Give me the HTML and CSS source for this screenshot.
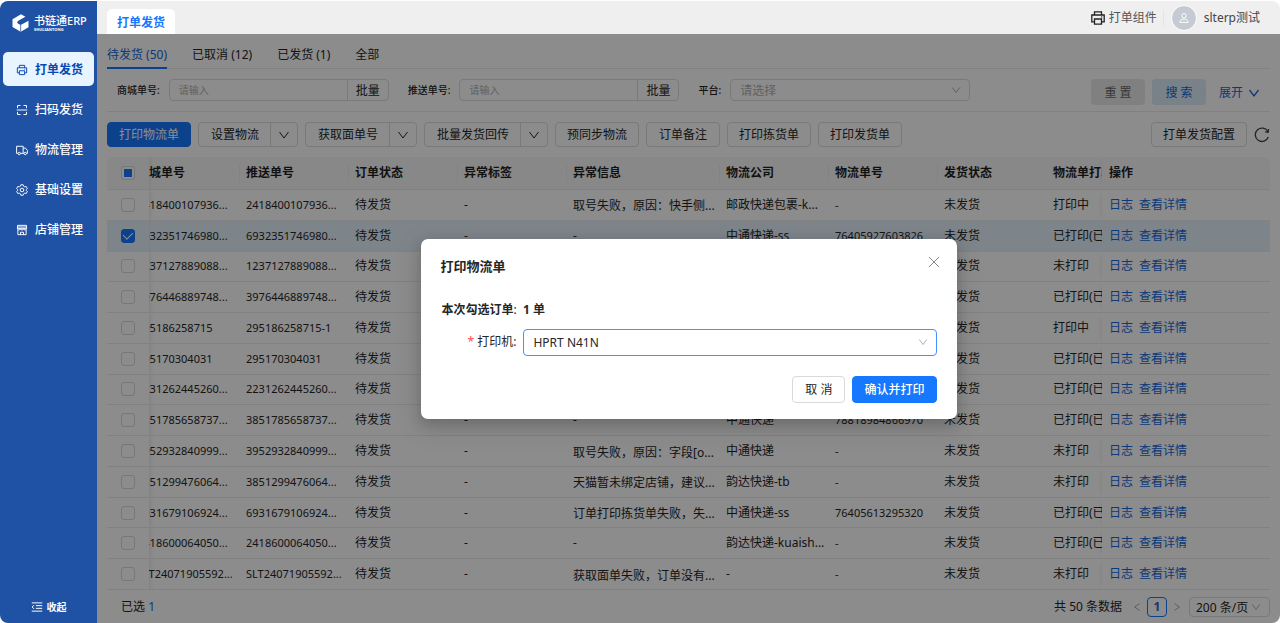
FILE: index.html
```html
<!DOCTYPE html>
<html lang="zh-CN">
<head>
<meta charset="utf-8">
<meta name="viewport" content="width=device-width, initial-scale=1">
<title>书链通ERP</title>
<link rel="stylesheet" href="styles.css">
</head>
<body>
<svg class="sprite" aria-hidden="true">
  <symbol id="i-print" viewBox="0 0 16 16"><path d="M4.500 5V1.800h7V5M4.500 11.800H1.800V5h12.400v6.800h-2.700M4.500 9h7v5.200h-7z"/><path d="M11.200 7h1"/></symbol>
  <symbol id="i-down" viewBox="0 0 12 12"><path d="M1.500 3 6 9l4.500-6"/></symbol>
  <symbol id="i-left" viewBox="0 0 12 12"><path d="M9 2 3 6l6 4"/></symbol>
  <symbol id="i-right" viewBox="0 0 12 12"><path d="m3 2 6 4-6 4"/></symbol>
</svg>
<div class="app">
  <aside class="sidebar">
    <div class="logo">
      <svg class="logo-mark" viewBox="0 0 17 18"><path fill="#fff" d="M.5 5.200 9 .3l4.400 2.500-6.600 3.800C4.600 8 5 9 6.200 9.700L8.700 11v6.700L.5 13z"/><path fill="#fff" d="M8.700 11 16.500 6.800v6.400l-7.800 4.500z"/><path d="M8.700 11v6.500" stroke="#1f51a5" stroke-width=".7"/></svg>
      <div class="logo-text"><span class="logo-name">书链通ERP</span><span class="logo-sub">SHULIANTONG</span></div>
    </div>
    <nav class="menu">
      <a class="menu-item active" href="#"><svg class="icon"><use href="#i-print"/></svg>打单发货</a>
      <a class="menu-item" href="#"><svg class="icon" viewBox="0 0 16 16"><path d="M2 5.500V2h4M10 2h4v3.500M2 10.500V14h4M10 14h4v-3.500M1 8h14"/></svg>扫码发货</a>
      <a class="menu-item" href="#"><svg class="icon" viewBox="0 0 16 16"><path d="M2.500 12.500H.8V3h8.700v9.500H6M9.500 5.500h3.200L15.200 8.500v4h-1M9.500 12.500h1"/><circle cx="4.300" cy="12.700" r="1.600"/><circle cx="12.300" cy="12.700" r="1.600"/></svg>物流管理</a>
      <a class="menu-item" href="#"><svg class="icon" viewBox="0 0 16 16"><path d="M6.500 1h3l.6 1.900 1.500.9 2-.5L15.100 6l-1.400 1.500v1L15.100 10l-1.500 2.700-2-.5-1.500.9L9.500 15h-3l-.6-1.900-1.500-.9-2 .5L.9 10l1.400-1.500v-1L.9 6l1.500-2.700 2 .5 1.500-.9z"/><circle cx="8" cy="8" r="2.400"/></svg>基础设置</a>
      <a class="menu-item" href="#"><svg class="icon" viewBox="0 0 16 16"><path d="M2 1.800h12v4.400H2zM2.500 8v6.200h11V8M1.800 6.200c0 2.400 4 2.400 4 0 0 2.400 4.400 2.400 4.400 0 0 2.400 4 2.400 4 0M6 14v-3h4v3M2 4h12"/></svg>店铺管理</a>
    </nav>
    <button class="collapse" type="button"><svg class="icon" viewBox="0 0 16 16"><path d="M1 2.500h14M6.500 6.200H15M6.500 9.800H15M1 13.500h14M4 5.500 1.500 8 4 10.500"/></svg>收起</button>
  </aside>

  <div class="main">
    <header class="topbar">
      <a class="page-tab" href="#">打单发货</a>
      <div class="top-right">
        <a class="component" href="#"><svg class="icon"><use href="#i-print"/></svg>打单组件</a>
        <span class="avatar"><svg class="icon" viewBox="0 0 16 16"><circle cx="8" cy="5" r="3"/><path d="M2.500 13.800c0-3.200 2-4.300 5.500-4.300s5.500 1.100 5.500 4.300z"/></svg></span>
        <span class="user">slterp测试</span>
      </div>
    </header>

    <div class="workspace">
      <div class="content">
        <nav class="tabs">
          <a class="tab current" href="#">待发货 (50)</a>
          <a class="tab" href="#">已取消 (12)</a>
          <a class="tab" href="#">已发货 (1)</a>
          <a class="tab" href="#">全部</a>
        </nav>

        <form class="filters">
          <div class="field">
            <label for="mall">商城单号:</label>
            <div class="group"><input id="mall" type="text" placeholder="请输入"><button type="button">批量</button></div>
          </div>
          <div class="field">
            <label for="push">推送单号:</label>
            <div class="group"><input id="push" type="text" placeholder="请输入"><button type="button">批量</button></div>
          </div>
          <div class="field">
            <label for="platform">平台:</label>
            <div class="select wide"><select id="platform" class="placeholder"><option>请选择</option></select><svg class="icon"><use href="#i-down"/></svg></div>
          </div>
          <div class="filter-actions">
            <button class="reset" type="button">重 置</button>
            <button class="search" type="button">搜 索</button>
            <button class="expand" type="button">展开<svg class="icon"><use href="#i-down"/></svg></button>
          </div>
        </form>

        <div class="actions">
          <button class="btn primary" type="button">打印物流单</button>
          <div class="split"><button type="button">设置物流</button><button class="caret" type="button" aria-label="更多"><svg class="icon"><use href="#i-down"/></svg></button></div>
          <div class="split"><button type="button">获取面单号</button><button class="caret" type="button" aria-label="更多"><svg class="icon"><use href="#i-down"/></svg></button></div>
          <div class="split"><button type="button">批量发货回传</button><button class="caret" type="button" aria-label="更多"><svg class="icon"><use href="#i-down"/></svg></button></div>
          <button class="btn" type="button">预同步物流</button>
          <button class="btn" type="button">订单备注</button>
          <button class="btn" type="button">打印拣货单</button>
          <button class="btn" type="button">打印发货单</button>
          <button class="btn config" type="button">打单发货配置</button>
          <button class="reload" type="button" aria-label="刷新"><svg class="icon" viewBox="0 0 16 16"><path d="M14.300 10A6.700 6.700 0 1 1 14 4.800M14.600 2.200 14.200 5.200 11.200 4.800"/></svg></button>
        </div>

        <div class="table-wrap">
          <table>
            <colgroup><col class="c-check"><col class="c-mall"><col class="c-std"><col class="c-std"><col class="c-std"><col class="c-info"><col class="c-std"><col class="c-std"><col class="c-std"><col class="c-print"><col></colgroup>
            <thead>
              <tr><th><input class="some" type="checkbox" aria-label="全选"></th><th class="mall"><span>商城单号</span></th><th>推送单号</th><th>订单状态</th><th>异常标签</th><th>异常信息</th><th>物流公司</th><th>物流单号</th><th>发货状态</th><th class="cut">物流单打印</th><th class="ops">操作</th></tr>
            </thead>
            <tbody>
              <tr><td><input type="checkbox" aria-label="选择"></td><td class="num mall"><span>2418400107936...</span></td><td class="num">2418400107936...</td><td>待发货</td><td>-</td><td class="info">取号失败，原因：快手侧...</td><td>邮政快递包裹-k...</td><td class="num">-</td><td>未发货</td><td class="cut">打印中</td><td class="ops"><a href="#">日志</a><a href="#">查看详情</a></td></tr>
              <tr class="selected"><td><input type="checkbox" aria-label="选择" checked></td><td class="num mall"><span>6932351746980...</span></td><td class="num">6932351746980...</td><td>待发货</td><td>-</td><td>-</td><td>中通快递-ss</td><td class="num">76405927603826</td><td>未发货</td><td class="cut">已打印(已</td><td class="ops"><a href="#">日志</a><a href="#">查看详情</a></td></tr>
              <tr><td><input type="checkbox" aria-label="选择"></td><td class="num mall"><span>1237127889088...</span></td><td class="num">1237127889088...</td><td>待发货</td><td></td><td></td><td></td><td></td><td>未发货</td><td class="cut">未打印</td><td class="ops"><a href="#">日志</a><a href="#">查看详情</a></td></tr>
              <tr><td><input type="checkbox" aria-label="选择"></td><td class="num mall"><span>3976446889748...</span></td><td class="num">3976446889748...</td><td>待发货</td><td></td><td></td><td></td><td></td><td>未发货</td><td class="cut">已打印(已</td><td class="ops"><a href="#">日志</a><a href="#">查看详情</a></td></tr>
              <tr><td><input type="checkbox" aria-label="选择"></td><td class="num mall"><span>295186258715</span></td><td class="num">295186258715-1</td><td>待发货</td><td></td><td></td><td></td><td></td><td>未发货</td><td class="cut">打印中</td><td class="ops"><a href="#">日志</a><a href="#">查看详情</a></td></tr>
              <tr><td><input type="checkbox" aria-label="选择"></td><td class="num mall"><span>295170304031</span></td><td class="num">295170304031</td><td>待发货</td><td></td><td></td><td></td><td></td><td>未发货</td><td class="cut">已打印(已</td><td class="ops"><a href="#">日志</a><a href="#">查看详情</a></td></tr>
              <tr><td><input type="checkbox" aria-label="选择"></td><td class="num mall"><span>2231262445260...</span></td><td class="num">2231262445260...</td><td>待发货</td><td></td><td></td><td></td><td></td><td>未发货</td><td class="cut">已打印(已</td><td class="ops"><a href="#">日志</a><a href="#">查看详情</a></td></tr>
              <tr><td><input type="checkbox" aria-label="选择"></td><td class="num mall"><span>3851785658737...</span></td><td class="num">3851785658737...</td><td>待发货</td><td>-</td><td>-</td><td>中通快递</td><td class="num">78818984866970</td><td>未发货</td><td class="cut">已打印(已</td><td class="ops"><a href="#">日志</a><a href="#">查看详情</a></td></tr>
              <tr><td><input type="checkbox" aria-label="选择"></td><td class="num mall"><span>3952932840999...</span></td><td class="num">3952932840999...</td><td>待发货</td><td>-</td><td class="info">取号失败，原因：字段[o...</td><td>中通快递</td><td class="num">-</td><td>未发货</td><td class="cut">未打印</td><td class="ops"><a href="#">日志</a><a href="#">查看详情</a></td></tr>
              <tr><td><input type="checkbox" aria-label="选择"></td><td class="num mall"><span>3851299476064...</span></td><td class="num">3851299476064...</td><td>待发货</td><td>-</td><td class="info">天猫暂未绑定店铺，建议...</td><td>韵达快递-tb</td><td class="num">-</td><td>未发货</td><td class="cut">未打印</td><td class="ops"><a href="#">日志</a><a href="#">查看详情</a></td></tr>
              <tr><td><input type="checkbox" aria-label="选择"></td><td class="num mall"><span>6931679106924...</span></td><td class="num">6931679106924...</td><td>待发货</td><td>-</td><td class="info">订单打印拣货单失败，失...</td><td>中通快递-ss</td><td class="num">76405613295320</td><td>未发货</td><td class="cut">已打印(已</td><td class="ops"><a href="#">日志</a><a href="#">查看详情</a></td></tr>
              <tr><td><input type="checkbox" aria-label="选择"></td><td class="num mall"><span>2418600064050...</span></td><td class="num">2418600064050...</td><td>待发货</td><td>-</td><td>-</td><td>韵达快递-kuaish...</td><td class="num">-</td><td>未发货</td><td class="cut">已打印(已</td><td class="ops"><a href="#">日志</a><a href="#">查看详情</a></td></tr>
              <tr><td><input type="checkbox" aria-label="选择"></td><td class="num mall"><span>SLT24071905592...</span></td><td class="num">SLT24071905592...</td><td>待发货</td><td>-</td><td class="info">获取面单失败，订单没有...</td><td>-</td><td class="num">-</td><td>未发货</td><td class="cut">未打印</td><td class="ops"><a href="#">日志</a><a href="#">查看详情</a></td></tr>
            </tbody>
          </table>
        </div>

        <footer class="footer">
          <span>已选 <a href="#">1</a></span>
          <div class="pager">
            <span class="total">共 50 条数据</span>
            <button class="step" type="button" aria-label="上一页"><svg class="icon"><use href="#i-left"/></svg></button>
            <button class="page" type="button">1</button>
            <button class="step" type="button" aria-label="下一页"><svg class="icon"><use href="#i-right"/></svg></button>
            <div class="select size"><select aria-label="每页条数"><option>200 条/页</option></select><svg class="icon"><use href="#i-down"/></svg></div>
          </div>
        </footer>
      </div>

      <div class="mask">
        <section class="modal" role="dialog" aria-labelledby="modal-title">
          <div class="modal-head">
            <h2 id="modal-title">打印物流单</h2>
            <button class="close" type="button" aria-label="关闭"><svg class="icon" viewBox="0 0 12 12"><path d="m1 1 10 10M11 1 1 11"/></svg></button>
          </div>
          <p class="count"><b>本次勾选订单</b>:&nbsp; <b>1 单</b></p>
          <div class="printer">
            <label for="printer"><span class="star">*</span> 打印机:</label>
            <div class="select focus"><select id="printer"><option>HPRT N41N</option></select><svg class="icon"><use href="#i-down"/></svg></div>
          </div>
          <div class="modal-foot">
            <button class="cancel" type="button">取 消</button>
            <button class="ok" type="button">确认并打印</button>
          </div>
        </section>
      </div>
    </div>
  </div>
</div>
</body>
</html>
```

FILE: styles.css
```css
* { box-sizing: border-box; }
body {
  margin: 0;
  background: #fff;
  color: #262626;
  font: 12px/20px "Noto Sans", "Noto Sans CJK SC", sans-serif;
}
a { color: #1668dc; text-decoration: none; }
button, input, select { font: inherit; color: inherit; margin: 0; }
button { background: none; border: 0; padding: 1px 0 0; white-space: nowrap; }
.sprite { position: absolute; width: 0; height: 0; }
.icon { width: 12px; height: 12px; flex: none; fill: none; stroke: currentColor; stroke-width: 1.300; }

.app {
  display: grid;
  grid-template-columns: 97px 1fr;
  height: 100vh;
  padding-top: 1px;
  overflow: hidden;
  background: #fff;
}

/* Sidebar */
.sidebar {
  display: flex;
  flex-direction: column;
  padding: 13px 3px 6px;
  background: #1f51a5;
  color: #fff;
  border-radius: 8px 0 0 8px;
}
.logo { display: flex; gap: 5px; height: 20px; padding-left: 9px; }
.logo-mark { width: 17px; height: 18px; flex: none; }
.logo-text { display: flex; flex-direction: column; white-space: nowrap; }
.logo-name { font-size: 11px; line-height: 14px; font-weight: 500; }
.logo-sub { font-size: 4px; line-height: 4px; font-weight: 700; }
.menu { display: flex; flex-direction: column; gap: 6px; margin-top: 18px; }
.menu-item {
  display: flex;
  align-items: center;
  gap: 7px;
  height: 34px;
  padding: 2px 0 0 13px;
  border-radius: 5px;
  color: #fff;
  font-weight: 500;
}
.menu-item.active { background: #e8f4ff; color: #0a48b3; font-weight: 700; }
.collapse {
  display: flex;
  justify-content: center;
  align-items: center;
  gap: 4px;
  margin-top: auto;
  color: #fff;
  font-size: 10px;
  font-weight: 700;
}

/* Top bar */
.main { display: flex; flex-direction: column; min-width: 0; }
.topbar {
  display: flex;
  align-items: flex-end;
  justify-content: space-between;
  height: 33px;
  padding: 0 20px 0 10px;
  background: #efefef;
  border-top-right-radius: 8px;
}
.page-tab {
  padding: 4px 10px 1px;
  border-radius: 5px 5px 0 0;
  background: #fff;
  color: #1677ff;
  font-weight: 700;
}
.top-right { display: flex; align-items: center; height: 33px; padding-top: 1px; }
.component { display: flex; align-items: center; gap: 3px; padding-right: 6px; border-right: 1px solid #e4e4e4; color: #555; line-height: 12px; }
.component .icon { width: 16px; height: 16px; color: #222; }
.avatar {
  display: grid;
  place-items: center;
  width: 26px;
  height: 26px;
  margin: 0 7px;
  border: 1px solid #fff;
  border-radius: 50%;
  background: #c5cad3;
  color: #fff;
}
.user { color: #444; }

/* Workspace */
.workspace { position: relative; display: flex; flex: 1; min-height: 0; border-radius: 0 0 8px 0; overflow: hidden; }
.content { display: flex; flex-direction: column; flex: 1; min-width: 0; padding: 0 10px; }
.tabs { display: flex; gap: 25px; height: 35px; border-bottom: 1px solid #ebebeb; }
.tab { padding-top: 11px; height: 35px; color: #262626; white-space: nowrap; }
.tab.current { color: #1668dc; border-bottom: 2px solid #1677ff; }

.filters { display: flex; align-items: flex-start; gap: 19px; height: 43px; padding: 10px 10px 0; border-bottom: 1px solid #ebebeb; }
.field { display: flex; align-items: center; gap: 9px; }
.field label { font-size: 10px; font-weight: 500; white-space: nowrap; }
.group { display: flex; height: 22px; border: 1px solid #dcdcdc; border-radius: 4px; }
.group input { width: 178px; padding: 0 9px; border: 0; border-right: 1px solid #dcdcdc; background: none; font-size: 10px; }
.group input::placeholder { color: #b0b0b0; }
.group button { width: 40px; }
.select { position: relative; display: flex; align-items: center; border: 1px solid #dcdcdc; border-radius: 4px; }
.select select { appearance: none; width: 100%; height: 100%; padding: 1px 9px 0; border: 0; background: none; outline: 0; }
.select .icon { position: absolute; right: 8px; width: 10px; color: #a0a0a0; stroke-width: 1; pointer-events: none; }
.select .placeholder { color: #b0b0b0; }
.wide { width: 240px; height: 22px; }
.filter-actions { display: flex; gap: 7px; margin-left: auto; }
.reset, .search { width: 54px; height: 26px; border-radius: 4px; background: #eaeaec; color: #666; }
.search { background: #dcebfa; color: #1668dc; }
.expand { display: flex; align-items: center; gap: 5px; padding-left: 6px; height: 26px; color: #1668dc; }

.actions { display: flex; gap: 7px; padding: 10px 0; }
.btn, .split { height: 25px; border: 1px solid #dcdcdc; border-radius: 4px; }
.btn { min-width: 74px; padding: 1px 11px 0; }
.btn.primary { background: #1677ff; border-color: #1677ff; color: #fff; }
.split { display: flex; }
.split button { padding: 1px 11px 0 12px; }
.split .caret { display: grid; place-items: center; width: 27px; padding: 0; border-left: 1px solid #dcdcdc; }
.caret .icon { stroke-width: 1; }
.config { margin-left: auto; }
.reload { display: flex; align-items: center; color: #444; }
.reload .icon { width: 16px; height: 16px; }

/* Table */
.table-wrap { flex: 1; min-height: 0; }
table { width: 100%; height: 100%; table-layout: fixed; border-collapse: separate; border-spacing: 0; }
.c-check { width: 42px; }
.c-mall { width: 90px; }
.c-std { width: 109px; }
.c-info { width: 153px; }
.c-print { width: 56px; }
th, td { padding: 0 0 0 7px; border-bottom: 1px solid #ebebeb; text-align: left; line-height: 16px; white-space: nowrap; }
td { height: 30px; }
th { height: 33px; background: #f8f8f8; font-weight: 700; color: #1f1f1f; }
th:first-child { border-top-left-radius: 6px; }
th:last-child { border-top-right-radius: 6px; }
th:nth-child(n+3):nth-child(-n+9) { background: linear-gradient(#efefef, #efefef) 0 50% / 1px 18px no-repeat #f8f8f8; }
th:first-child, td:first-child { padding-left: 14px; }
.num { font-size: 11px; }
.mall { padding-left: 0; overflow: hidden; box-shadow: inset 5px 0 4px -4px #e6e6e6; }
.mall span { margin-left: -12px; }
.info { padding-top: 3px; }
.cut { overflow: hidden; }
.ops { box-shadow: -4px 0 4px -4px #e6e6e6; }
.ops a + a { margin-left: 6px; }
.selected td { background: #e5f2fc; }
input[type="checkbox"] {
  appearance: none;
  display: grid;
  place-items: center;
  width: 14px;
  height: 14px;
  border: 1px solid #d9d9d9;
  border-radius: 3px;
  background: #fff;
}
input[type="checkbox"]:checked { background: #1677ff; border-color: #1677ff; }
input[type="checkbox"]:checked::after {
  content: "";
  width: 5px;
  height: 8px;
  margin-bottom: 2px;
  border: solid #fff;
  border-width: 0 1px 1px 0;
  transform: rotate(45deg);
}
.some::after { content: ""; width: 8px; height: 8px; background: #1677ff; }

/* Footer */
.footer { display: flex; justify-content: space-between; align-items: center; height: 33px; padding: 1px 0 0 14px; }
.pager { display: flex; align-items: center; gap: 5px; }
.total { margin-right: 5px; }
.step { display: flex; padding: 0; color: #999; }
.step .icon { width: 10px; stroke-width: 1; }
.page { width: 20px; height: 20px; padding: 0; border: 1px solid #1677ff; border-radius: 4px; color: #1668dc; font-weight: 700; line-height: 18px; }
.size { width: 81px; height: 20px; margin-left: 2px; }
.size select { padding: 0 6px; }

/* Modal */
.mask { position: absolute; inset: 0; display: grid; place-items: center; background: rgba(0, 0, 0, .45); }
.modal {
  width: 536px;
  padding: 16px 20px;
  border-radius: 7px;
  background: #fff;
  box-shadow: 0 5px 14px rgba(0, 0, 0, .18), 0 8px 24px 6px rgba(0, 0, 0, .08);
}
.modal-head { display: flex; justify-content: space-between; align-items: flex-start; }
.modal-head h2 { margin: 0; font-size: 13px; line-height: 22px; }
.close { display: flex; padding: 1px 0 0; margin-right: -3px; color: #888; }
.close .icon { stroke-width: 1; }
.count { margin: 23px 0 9px 1px; }
.printer { display: flex; align-items: center; gap: 7px; padding-left: 27px; }
.star { color: #ff4d4f; }
.focus { flex: 1; height: 27px; border-color: #4096ff; }
.modal-foot { display: flex; justify-content: flex-end; gap: 7px; margin-top: 20px; }
.cancel, .ok { height: 27px; border: 1px solid #d9d9d9; border-radius: 4px; padding: 1px 12px 0; }
.ok { padding: 1px 11px 0; border-color: #1677ff; background: #1677ff; color: #fff; font-weight: 500; }
```
